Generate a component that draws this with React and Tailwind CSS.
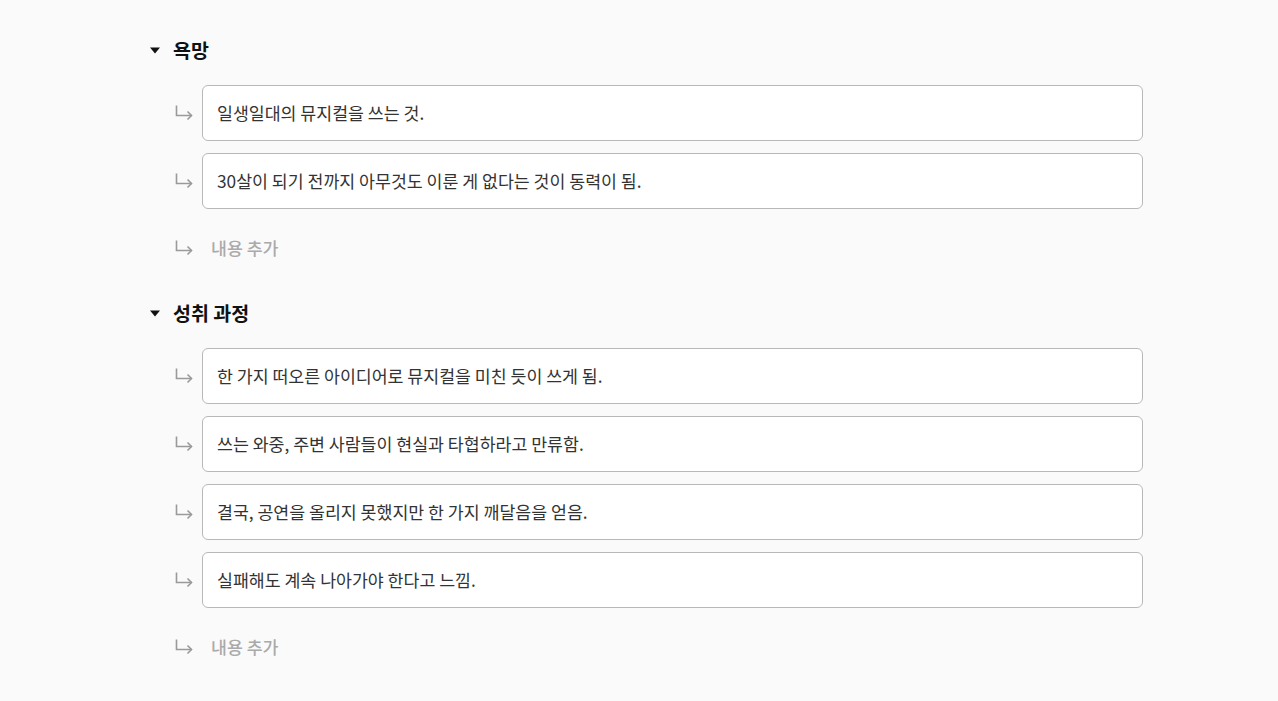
import React from "react";

const sections = [
  {
    title: "욕망",
    items: ["일생일대의 뮤지컬을 쓰는 것.", "30살이 되기 전까지 아무것도 이룬 게 없다는 것이 동력이 됨."],
  },
  {
    title: "성취 과정",
    items: [
      "한 가지 떠오른 아이디어로 뮤지컬을 미친 듯이 쓰게 됨.",
      "쓰는 와중, 주변 사람들이 현실과 타협하라고 만류함.",
      "결국, 공연을 올리지 못했지만 한 가지 깨달음을 얻음.",
      "실패해도 계속 나아가야 한다고 느낌.",
    ],
  },
];

function Arrow() {
  return (
    <svg width="20" height="18" viewBox="0 0 20 18" fill="none" className="shrink-0 text-[#9a9a9a]">
      <path d="M2.5 1.5V11.5H17.5" stroke="currentColor" strokeWidth="1.6" />
      <path d="M13.5 7.5L17.5 11.5L13.5 15.5" stroke="currentColor" strokeWidth="1.6" />
    </svg>
  );
}

function Caret() {
  return (
    <svg width="10" height="7" viewBox="0 0 10 7" className="shrink-0">
      <path d="M0 0.5H10L5 6.5Z" fill="#111" />
    </svg>
  );
}

function Section({ title, items }) {
  return (
    <div className="flex flex-col">
      <div className="flex items-center h-7 gap-[13px]">
        <Caret />
        <span className="text-[19.5px] font-bold text-[#111]">{title}</span>
      </div>
      <div className="flex flex-col gap-3 mt-[21px] pl-6">
        {items.map((text) => (
          <div key={text} className="flex items-center gap-2">
            <Arrow />
            <div className="flex-1 h-14 flex items-center px-[14px] bg-white border border-[#b8b8b8] rounded-md text-[17.3px] text-[#333]">
              {text}
            </div>
          </div>
        ))}
        <div className="flex items-center gap-2 h-[54px]">
          <Arrow />
          <span className="pl-[9px] text-[17.3px] font-medium text-[#aaa]">내용 추가</span>
        </div>
      </div>
    </div>
  );
}

export default function App() {
  return (
    <div
      className="min-h-screen bg-[#fafafa]"
      style={{ fontFamily: '"Noto Sans CJK KR", "Noto Sans", sans-serif' }}
    >
      <div className="ml-[150px] w-[993px] pt-9 flex flex-col gap-[24px]">
        {sections.map((s) => (
          <Section key={s.title} title={s.title} items={s.items} />
        ))}
      </div>
    </div>
  );
}
